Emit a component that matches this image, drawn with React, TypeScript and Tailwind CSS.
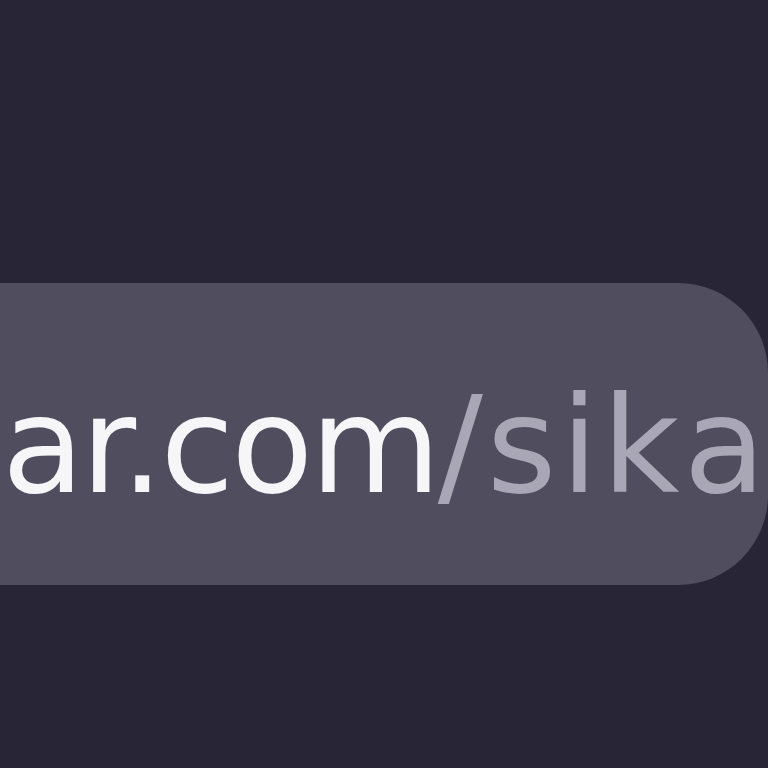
export default function App() {
  return (
    <div className="h-screen w-full overflow-hidden bg-[#282636] pt-[283px]">
      <div className="flex h-[302px] w-[768px] items-center overflow-hidden rounded-r-[90px] bg-[#504e5e]">
        <p
          className="ml-[2px] mt-[24px] whitespace-nowrap text-[134px] leading-none tracking-[-3px] text-[#f6f5f8]"
          style={{ fontFamily: '"DejaVu Sans", sans-serif' }}
        >
          ar.com<span className="tracking-[4px] text-[#a9a7b5]">/sik</span>
          <span className="text-[#a9a7b5]">a</span>
        </p>
      </div>
    </div>
  );
}
